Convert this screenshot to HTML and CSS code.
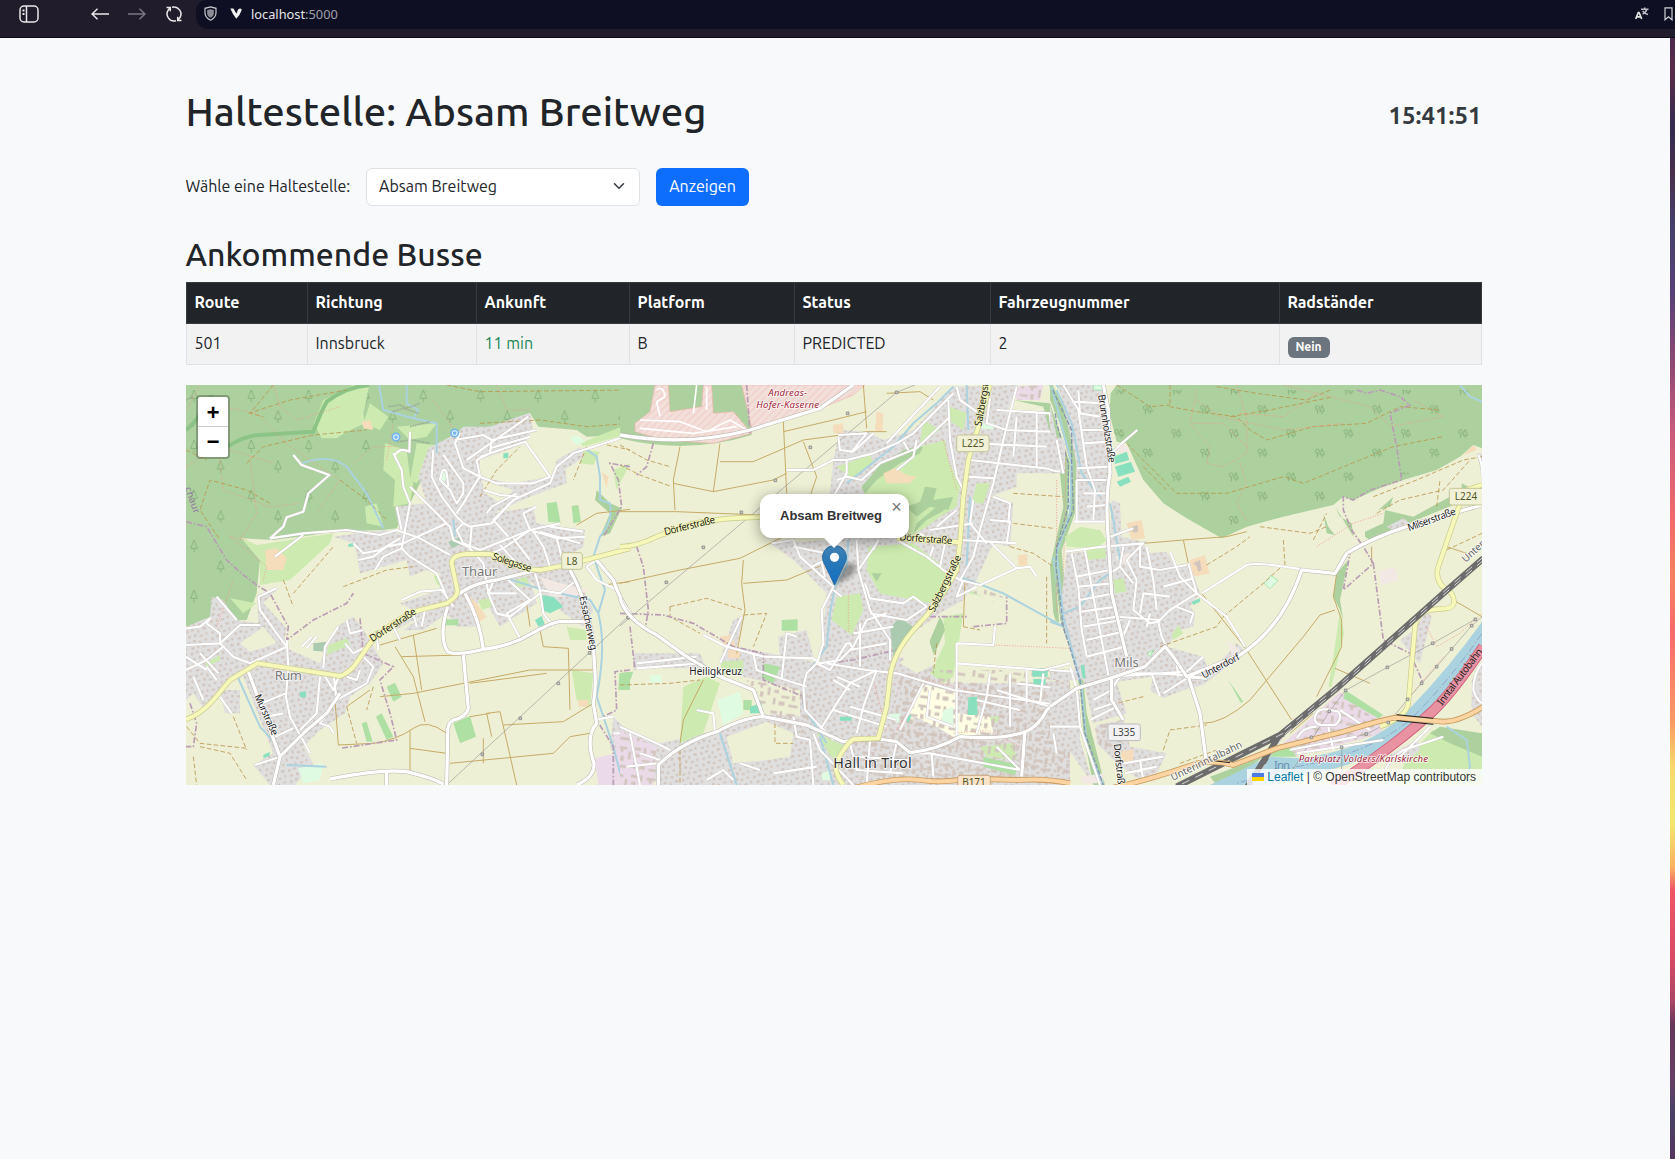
FILE: index.html
```html
<!DOCTYPE html>
<html lang="de">
<head>
<meta charset="utf-8">
<title>Haltestelle: Absam Breitweg</title>
<link rel="stylesheet" href="styles.css">
</head>
<body>
<header class="browser">
  <nav class="tools">
    <svg class="ico side" width="20" height="18" viewBox="0 0 20 18"><rect x="1" y="1" width="18" height="16" rx="4"/><path d="M7.500 1v16"/><path d="M3.500 5.500h2M3.500 9h2" stroke-width="2"/></svg>
    <svg class="ico back" width="18" height="12" viewBox="0 0 18 12"><path d="M18 6H1M6.500 .8L1 6l5.500 5.200"/></svg>
    <svg class="ico fwd" width="18" height="12" viewBox="0 0 18 12"><path d="M0 6h17M11.500 .8L17 6l-5.500 5.200"/></svg>
    <svg class="ico reload" width="18" height="18" viewBox="0 0 18 18"><path d="M7 2.300A7 7 0 0 1 14.800 12.800L13.300 14.700M11 15.700A7 7 0 0 1 3.200 5.200L4.700 3.300M1.500 2.500H5.300V6.300M16.500 15.500H12.700V11.700"/></svg>
  </nav>
  <div class="url">
    <svg width="13" height="15" viewBox="0 0 13 15"><path d="M6.500 .8L12 2.300v4.500c0 3.500-2.300 6-5.500 7.400C3.300 12.800 1 10.300 1 6.800V2.300z" fill="none" stroke="#c9c9ce" stroke-width="1.200"/><path d="M6.500 3.200l3.300.9v3.100c0 2-1.300 3.500-3.300 4.600-2-1.100-3.300-2.600-3.300-4.600V4.100z" fill="#8c8c95"/></svg>
    <svg class="vee" width="12" height="11" viewBox="0 0 12 11"><path d="M.3.500h3.200L6.300 5.500Q7.300 4.700 7.600 2.600 8 .6 9.800.4q2.300.1 1.700 2Q9.800 7.500 6.300 10.700 3 7 .3.500z" fill="#f1f1f1"/></svg>
    <span class="addr">localhost<i>:5000</i></span>
    <span class="grow"></span>
    <svg class="trans" width="14" height="13" viewBox="0 0 14 13"><path d="M.7 12L3.300 5.500h.8L6.700 12M1.800 9.800h3.800" fill="none" stroke="#e4e4e4" stroke-width="1.700"/><path d="M6 2.200h7.500M9.700.5v1.700M11.800 2.500Q11 5.500 7.500 7M7.700 3.800Q9.300 6.500 13 7.500" fill="none" stroke="#bcbcc4" stroke-width="1.500"/></svg>
    <svg width="9" height="14" viewBox="0 0 9 14"><path d="M1 .8h7v12L4.500 9.800 1 12.800z" fill="none" stroke="#d0d0d6" stroke-width="1.200"/></svg>
  </div>
</header>
<div class="view">
<main>
  <div class="head"><h1>Haltestelle: Absam Breitweg</h1><div class="clock">15:41:51</div></div>
  <form class="pick">
    <label>Wähle eine Haltestelle:</label>
    <div class="select"><span>Absam Breitweg</span><svg width="16" height="12" viewBox="0 0 16 16"><path d="M2 5l6 6 6-6" fill="none" stroke="#343a40" stroke-width="2" stroke-linecap="round" stroke-linejoin="round"/></svg></div>
    <button type="button">Anzeigen</button>
  </form>
  <h2>Ankommende Busse</h2>
  <table>
    <colgroup><col class="c1"><col class="c2"><col class="c3"><col class="c4"><col class="c5"><col class="c6"><col class="c7"></colgroup>
    <thead><tr><th>Route</th><th>Richtung</th><th>Ankunft</th><th>Platform</th><th>Status</th><th>Fahrzeugnummer</th><th>Radständer</th></tr></thead>
    <tbody><tr><td>501</td><td>Innsbruck</td><td class="soon">11 min</td><td>B</td><td>PREDICTED</td><td>2</td><td><span class="badge">Nein</span></td></tr></tbody>
  </table>
  <section class="map">
    <svg class="tiles" width="1296" height="400" viewBox="0 0 1296 400">
      <defs>
        <pattern id="houses" width="71" height="67" patternUnits="userSpaceOnUse" patternTransform="rotate(-12)"><rect width="71" height="67" fill="#e0dfdf"/><path class="house" d="M3 4h7v8H3zM18 2h9v6h-9zM36 7h6v9h-6zM53 3h10v7H53zM5 21h9v6H5zM24 18h7v9h-7zM40 24h10v6H40zM58 19h6v8h-6zM2 38h6v9H2zM17 35h9v7h-9zM34 40h7v7h-7zM52 37h8v6h-8zM8 55h9v7H8zM26 53h6v9h-6zM42 56h10v6H42zM60 52h6v8h-6z"/></pattern>
        <pattern id="blocks" width="97" height="83" patternUnits="userSpaceOnUse" patternTransform="rotate(8)"><path class="house" d="M4 5h19v9H4zM31 4h8v20h-8zM7 25h14v10H7zM52 8h26v8H68v9h-8v-9h-8zM84 20h8v24h-8zM30 40h24v7H30zM62 36h10v16H62zM6 50h8v20H6zM24 58h18v12H24zM54 64h28v8H54z"/></pattern>
        <pattern id="mil" width="16" height="16" patternUnits="userSpaceOnUse" patternTransform="rotate(45)"><rect width="16" height="16" fill="#f3dfd9"/><path d="M8 0v16" stroke="#eebfb9" stroke-width="2"/></pattern>
        <pattern id="pines" width="172" height="150" patternUnits="userSpaceOnUse"><path id="pine" d="M42 30l-10 25h20zM42 55v12" fill="none" stroke="#83b078" stroke-width="2.600"/><use href="#pine" x="80" y="62"/></pattern>
        <pattern id="mixed" width="172" height="130" patternUnits="userSpaceOnUse"><g id="mx" fill="none" stroke="#80ad76" stroke-width="2.600"><circle cx="28" cy="25" r="6"/><path d="M28 31v13M42 18l-7 18h14zM42 36v8"/></g><use href="#mx" x="86" y="58"/></pattern>

        <g id="a-major">
          <path d="M205 875L300 1130L280 1215M300 1130L370 1060L440 1000L480 940"/>
          <path d="M820 655Q870 610 950 600L1080 568"/>
          <path d="M855 640Q900 720 910 808M803 680Q775 770 803 815Q830 828 910 808Q990 800 1060 758Q1130 720 1150 725L1215 725"/>
          <path d="M850 825L865 985Q860 1010 820 1020Q800 1030 803 1070L800 1215"/>
          <path d="M1170 570Q1240 700 1243 850Q1250 920 1240 970L1250 1030Q1215 1070 1242 1150Q1245 1190 1190 1215"/>
          <path d="M1245 535L1300 600Q1320 660 1350 700"/>
          <path d="M450 1197Q640 1160 700 1180Q760 1195 790 1212M620 1175V1215"/>
        </g>
        <g id="a-minor">
          <path d="M270 475L310 440L320 412L370 395L385 340L448 285L365 255L340 225"/>
          <path d="M270 475L370 460L500 450L600 465L650 450L720 475L810 525M285 530L370 465"/>
          <path d="M645 225Q660 200 688 215L690 155M640 220L665 270L670 320L690 370L675 450L665 505L690 530L770 580L800 650"/>
          <path d="M760 210L755 290L785 350L830 410L850 430L870 440L935 430L1000 360L1110 310L1130 260L1180 220L1350 165"/>
          <path d="M690 320L770 400L810 440L820 480L865 500L910 550L925 640L950 700L990 710L1080 640"/>
          <path d="M790 225L850 310L850 340L830 370L810 330L780 300Q790 250 800 280L805 320M900 290L880 320L850 370L830 400M900 290L850 265L825 190L840 160M825 180L910 165L935 180L930 220L890 240L900 290L950 310L1060 310L1110 290L1035 185L900 230M935 180L1070 150M930 205L1050 170M860 240L1045 110"/>
          <path d="M520 490L550 520L600 510L660 475M535 540L580 530L620 500L670 490L800 430M585 570L610 530L665 505M650 380L665 450"/>
          <path d="M850 430L830 450L850 490L900 510L1050 450L1140 430M875 440L870 500M910 330L960 345L1015 350M920 400L935 380L1010 340M935 520L970 505L1050 450L1130 475L1215 470M1130 475L1150 550L1175 570M1060 455L1090 500L1110 560M1050 450L1030 400L1070 380M1000 360L940 420L985 470M1000 475L1050 540M960 495L1010 550M1080 455L1200 490M1110 440L1210 455"/>
          <path d="M1065 580L1080 630L1140 640L1190 600M1080 630L1090 700L1120 740M985 600L1050 660L980 700L1020 775M940 605L925 640L1010 640M665 660L720 635L785 630L820 680M640 740L660 780M700 700L710 740M735 690L725 740M590 770L595 810"/>
          <path d="M18 795L120 790L160 830L210 850L320 800L290 760L240 690L235 650L290 625M18 745L60 740L90 715L80 730L120 760L120 790L180 735L240 735M110 650L170 720M18 870L80 840L130 800M40 890L70 960M80 860L110 900M60 820L115 880M18 830L80 870"/>
          <path d="M320 780L325 860L318 950L330 1010L390 1120M430 865L435 800L475 740M365 800L395 770M380 805L410 770M500 720L510 760L550 750M495 790L520 820L560 800M460 880L470 960L420 1030L450 1040L460 1060M470 960L560 910L580 860L550 830M420 890L410 1000L360 1050M430 880L460 930L480 880M245 970L318 940M260 1010L310 1000M285 1070L340 1045M225 1155L300 1130M540 870L530 900L500 890"/>
          <path d="M120 950L155 1000M1250 540L1220 560L1250 600L1310 630M1250 1018L1300 1010M1300 1060L1350 1060"/>
        </g>
        <g id="a-yellow"><path d="M18 1018Q60 1005 100 960L150 900L232 850L330 865L480 888Q505 880 525 855L570 790Q640 715 720 690L800 670Q835 650 832 630L815 550Q815 525 860 522L930 522L1000 550Q1040 570 1080 570L1160 555L1350 505"/></g>

        <g id="b-major">
          <path d="M0 165Q200 200 390 150L600 85L700 15"/>
          <path d="M0 655Q20 720 110 765L200 830L300 890L400 930L430 1010M115 1215V1155Q180 1090 290 1055Q380 1010 430 1010L560 1035L670 1085Q760 1070 830 1085L870 1118Q950 1110 1020 1070Q1130 1080 1200 1060Q1250 1050 1280 990L1350 935M1215 1050L1205 1190"/>
        </g>
        <g id="b-minor">
          <path d="M500 270H580L640 240L680 240L760 220L830 190L880 160L1000 40M655 165L740 160L690 220M655 170L660 210L700 215L760 160M680 240V280L640 350M650 300L680 290L725 300L780 250L890 205L990 110M830 270L880 230L890 180M850 185L865 210M800 190L960 20"/>
          <path d="M455 490L520 480L540 530L640 620L605 690L610 790L590 850L560 880L550 920L555 990L640 1080M520 500L620 520L640 480M575 560L605 545L615 590M650 490L640 570M710 480L715 570L750 690L810 780L810 840M715 570L770 490M735 610L750 655L850 670L880 650L920 680L860 720L750 700M775 480L760 510M640 630L665 650"/>
          <path d="M830 480L920 530L970 570L1020 600L1080 615L1190 565L1230 560L1250 590M1190 565L1110 485L1190 490M1110 420L1170 425L1160 490M1070 620L1010 650L1030 600M975 490L960 560M1020 480L1110 485M930 530L940 500"/>
          <path d="M985 60L990 180L1010 290L1030 330M1010 20L1020 60L1070 95M1190 20L1150 180L1120 310L1080 450L1060 530L1020 600M1050 240L1320 270M1070 190L1280 200M1130 90L1290 100L1300 220L1330 280M1190 110L1180 230M1250 95V260M1160 150L1290 155M1110 55L1100 130L1160 150M1040 290L1125 295M1120 350L1170 370L1165 430M1060 360L1050 430L1100 490M950 440L1010 390M930 450L1060 430M900 460L940 490"/>
          <path d="M430 830L580 835L600 850L660 840L700 800L740 720L800 700M485 895L500 760L530 770M400 820L410 870L480 895L560 920M590 850L630 870L680 790L690 790L700 810M620 850L740 870L830 880L1000 930L1350 980M770 870L690 910L650 970L600 1050M770 870L730 980L710 1060M690 980L830 1020M640 990L800 1040M650 890L720 920M640 900L690 930M700 760L820 740M690 810L800 790M720 730V860"/>
          <path d="M50 850L230 830M50 865L240 850M250 765L320 800L430 830M365 710L300 850M230 990L280 1000L285 1060M840 1050L910 910M1010 790L1010 1070M1010 790L1120 795L1125 740M1010 850L1270 870L1350 850M1110 880L1100 950L1070 1060M1170 880V1040M1130 930L1350 1000M1070 960L1200 990M1190 910L1350 930M1220 870V970M1270 880L1260 970M930 930L920 1010L1000 1040"/>
          <path d="M0 1040L110 1090L150 1110M30 1060L60 1215M60 1120L120 1140M20 1160L110 1150M520 1010L530 1070L570 1080L580 1215M580 1060L600 1110L700 1215M690 1090L710 1170L850 1180M750 1080L740 1215M700 1130L870 1140M830 1085L810 1180M870 1120L930 1120L1200 1170M1130 1100L1200 1170M260 1200L310 1170L340 1200M460 1180L590 1160M360 1150L420 1170M935 1120L940 1190"/>
        </g>
        <g id="b-yellow"><path d="M0 500Q50 500 110 470L220 430Q330 410 430 412L500 412M830 475L1020 487"/><path d="M1110 15L1072 150L1045 240L1030 350L1020 487L1010 570Q960 670 880 750Q820 820 810 890L800 980L775 1075L700 1078Q680 1090 650 1145Q640 1175 670 1215"/></g>

        <g id="c-major">
          <path d="M160 15L175 90L180 280Q165 350 175 480L185 640L230 830M0 980L80 925L180 895L285 860L345 800L370 830L410 890L470 895M185 895L185 960L220 1020M415 890L450 1000L468 1140M410 890L570 825Q700 740 755 570L855 580L890 520Q970 470 1100 430L1296 375"/>
        </g>
        <g id="c-minor">
          <path d="M585 800L530 710L440 640L415 550M455 640L590 555Q620 545 755 568"/>
          <path d="M40 15L85 90L110 260L135 330L130 420M85 30L90 100L150 110M65 65L170 70M95 150H170M100 190L180 185M80 265L180 260M80 300H175M100 340H170M110 380L170 375M70 425H170M80 300V430M20 180L40 280M0 270L30 275"/>
          <path d="M185 220L215 190L262 150M180 470L250 445M45 515L160 500L280 490L230 540L260 600L250 690L300 730L325 725L335 770L350 800M65 520L85 620L95 750L110 830M105 510L130 650L175 885M210 560L250 610M180 580L210 560L220 500M80 590L180 570M85 620L185 610M90 660L190 640M95 695L200 680M100 740L215 720M110 780L220 755M110 830L225 800M140 720L200 710L330 720M240 720L215 780"/>
          <path d="M360 515L390 590L440 640L360 690L325 725M330 570L410 555M340 620L430 595M290 500L310 600L320 690M270 500V560L330 570M380 680L430 700L420 730M360 650L280 640L270 700M300 700L290 740"/>
          <path d="M185 890L410 875L460 830M210 880L320 880L400 885M340 940L410 895M305 880L330 950M190 920L210 890M380 850L385 890M60 860L80 925L90 1040L150 1215M0 1040H90M10 1060L20 1120M0 870L70 875M120 1020L200 980M130 990L190 970M130 960L185 930M220 1150L340 1130M225 1180L320 1160M270 1140L280 1200"/>
          <path d="M795 1010Q800 985 830 988L865 995Q880 1015 855 1035L810 1035Q790 1025 795 1010M740 1075Q760 1040 800 1040M835 1040L850 1110M720 1110L920 1070M740 1120L1000 1080M870 990L960 1050M1000 1190Q1010 1140 1060 1110L1180 1070M1050 1130L1140 1040M1296 850Q1270 880 1270 930Q1280 960 1296 970M1285 225Q1300 260 1296 290"/>
        </g>
        <g id="c-yellow"><path d="M1296 315L1250 330L1225 385L1165 560Q1150 610 1205 640Q1225 680 1190 685L1140 690Q1100 700 1095 740L1075 970Q1070 1010 990 1040"/></g>
      </defs>

      <g transform="translate(-6 -5) scale(.33333)">
        <path class="forest" d="M18 15H1350V165L1220 170L1190 150L1075 140L1050 100L930 140L850 150L830 200L800 235L750 250L720 310L690 370L650 445L610 450L450 455L400 465L280 480L185 475L240 540L230 640L200 720L170 720L110 650L95 700L105 740L18 740ZM1250 330L1290 370L1325 385L1290 460L1260 470L1290 400L1245 360Z"/>
        <path class="pines" d="M18 15H1350V130H1075L1050 100L930 140L800 150L640 200L600 440L450 455L280 480L185 475L230 540L200 640L80 640L18 720Z"/>
        <path class="grass" d="M430 60L520 15H568L550 100L555 130L500 155L470 175H425L402 130ZM570 70L625 110L600 150L550 130ZM615 190L680 210L690 290L700 310L690 370L640 380L645 300L610 270ZM710 190L765 195L750 250L710 310L690 300ZM650 140L770 130L740 170L690 180ZM185 475L230 495L460 460L450 490L330 600L240 615L240 540ZM555 380L590 370L610 440L560 430ZM150 655L230 670L190 700ZM830 370L890 355L905 370L840 395ZM1210 210L1260 215L1240 255L1200 250ZM1300 270L1350 250L1310 330ZM1175 870L1240 880L1230 980L1190 960ZM1160 740L1220 750V780H1170ZM1200 190L1350 130V160L1210 200Z"/>
        <path class="orchard" d="M1100 370L1130 365L1142 430L1105 425ZM1175 378L1195 375L1203 425L1180 430ZM620 920L645 908L665 950L640 965ZM545 1030L560 1025L578 1085L560 1085ZM588 1010L605 1000L640 1070L620 1080ZM820 1030L870 1008L888 1070L840 1090ZM1318 880L1350 875V930H1315Z"/>
        <path class="town" d="M715 290L745 205L830 160L850 140L930 140L1050 98L1058 140L1035 190L900 240L895 290L1000 310L1110 290L1155 250L1160 310L1050 350L940 400L1060 380L1070 430L1215 450L1210 500L1160 530L1240 690L1210 740L1110 670L1050 600L1070 670L960 740L920 670L860 670L900 740L830 740L800 700L730 750L640 750L700 690L660 670L780 630L780 580L740 570L690 590L680 540L540 580L525 490L460 470L610 450L660 460L645 380L740 370ZM18 740L90 710L95 650L130 660L165 720L235 730L232 650L295 625L250 670L320 745L310 800L420 850L470 740L520 710L550 750L610 850L570 910L510 950L495 1000L420 1050L370 1100L400 1150L345 1215H270L220 1155L280 1120L190 890L140 910L70 985L40 940L18 960ZM1130 240L1200 200L1215 230L1120 290ZM1300 1010L1350 1060V1215L1290 1100ZM120 930H180V1000H135Z"/>
        <path class="orchard" d="M795 718H835V736H795Z"/><path class="grass" d="M445 795L500 775L510 795L440 825ZM75 850L120 825V840L80 862ZM760 585L775 590L785 625L770 610ZM1005 600L1040 590L1048 618L1010 620ZM895 660L930 655L935 680L905 690Z"/>
        <path class="farm" d="M600 775L740 700L600 800ZM905 300L1000 330L960 370L915 340ZM180 790L250 740L290 790L210 815ZM690 590L740 570L750 600L700 620Z"/>
        <path class="industry" d="M1245 1135L1310 1120L1300 1060L1350 1080V1215H1255Z"/><path class="pale" d="M1080 590L1140 610L1230 630L1180 650L1110 650Z"/>
        <path class="sport" d="M1080 645L1120 650L1150 680L1110 700L1085 690ZM1065 720L1085 708L1095 735L1075 740ZM360 935H378V952H360ZM970 220L985 218V235H970ZM505 493L520 488V500H505ZM250 1125L270 1115L268 1128L250 1135Z"/>
        <path class="mint" d="M355 1165L430 1150L420 1200L370 1210ZM785 270L800 285L790 315L780 300ZM1170 175Q1190 155 1215 185L1190 195Z"/>
        <path class="farmyard" d="M255 510L290 505L320 535L310 570L260 570ZM545 125L570 120L580 150L550 145ZM870 650L890 670L920 710L900 725L880 690ZM1265 275L1285 290L1280 325ZM1195 960H1225V980H1195Z"/>
        <path class="church" d="M805 485L840 470L848 490L815 505ZM400 790L440 785L435 815L400 812Z"/>
        <path class="water" d="M597 15L610 90L700 115L770 130L770 220M680 15V70L715 90L700 115M365 250Q450 220 500 260L560 340L610 445M1215 205L1250 230L1260 290V360L1290 370Q1300 420 1260 470L1240 530L1275 630L1255 700Q1280 800 1250 950L1300 1100L1330 1215M980 595L1090 630L1230 660L1255 700M175 895L240 1040L285 1090M320 1155L440 1160M820 420L825 470"/>
        <path class="ridge" d="M18 150Q60 120 75 60L100 50M145 198Q200 165 240 165L400 155Q425 90 440 65Q500 20 568 15"/>
        <path class="track" d="M18 210L80 240M205 100L330 60L500 30M280 15L210 100L250 110M200 250L250 200L400 165L560 150M270 370L200 330L90 300L60 390L120 480M480 300L560 360L620 420M900 130L1080 120L1220 140L1350 130M800 15L900 35L1350 30M900 350L950 270L1020 200M1220 200L1180 300M490 620L620 570L700 560M340 640L460 500M310 600L340 680M60 1100L150 1120L200 1200M40 1130L50 1215M20 1040L60 1090L200 1105M160 1010L200 1110M500 980L530 1090M580 920L560 990M1260 190L1350 210"/>
        <path class="path" d="M60 15L20 90M280 15L300 80L350 120L480 80M130 80L230 100L330 200L480 300L410 400M18 260L120 200L280 250M110 170L130 330L270 380L360 370M200 480L150 470L260 560L250 600M110 740L160 600M620 240L640 130M650 200L580 200L520 250M760 60L830 160M950 15L980 90L1050 90M210 230L230 400L180 480"/>
        <path class="field" d="M600 795L770 745M645 800L700 890L735 1025M700 765L725 930M665 830L850 825M600 950L700 940L1050 870L1240 870M870 910L1100 880M920 1000L960 995L1010 1215M970 1035L1150 1025L1240 970M690 1105L800 1120M690 1050V1175M810 1150L1120 1120L1170 1070L1230 1060M910 1075V1150M465 960L475 1095L580 1090Q650 1080 700 1045Q740 1015 800 1060M500 980L570 930M1080 750L1090 800L1165 805L1170 990M1040 670L1050 740M920 1000L935 1070M870 1010L930 1000M1190 435L1250 400L1350 388M1270 615L1350 605"/>
        <path class="border" d="M18 425L80 440L140 540L190 585L230 615L270 640L325 740L320 780L400 720L500 670L520 640M540 715L550 820L640 860L600 900L630 1000L650 1080L480 1105M30 970L50 1030L40 1100L18 1100M1350 260L1290 250L1315 300L1325 380L1270 470M1350 870L1305 875L1310 990L1250 1020L1300 1100V1215"/>
        <path class="power" d="M800 1215L1350 705"/>
        <path class="knots" d="M1131 906h8v8h-8zM1017 1011h8v8h-8zM903 1119h8v8h-8zM1225 815h8v8h-8zM1341 708h8v8h-8z"/>
        <path class="rocks" d="M625 80L660 75L680 85L720 70M640 95L670 85L715 100M690 140L750 125M650 185L700 180L750 190M18 60L40 50"/>
        <g class="minor-case"><use href="#a-minor"/></g><g class="minor"><use href="#a-minor"/></g>
        <g class="major-case"><use href="#a-major"/></g><g class="major"><use href="#a-major"/></g>
        <g class="yellow-case"><use href="#a-yellow"/></g><g class="yellow"><use href="#a-yellow"/></g>
        <g class="spring"><circle cx="648" cy="171" r="11"/><circle cx="824" cy="159" r="11"/><circle cx="648" cy="171" r="3"/><circle cx="824" cy="159" r="3"/></g>
      </g>

      <g transform="translate(434 -5) scale(.33333)">
        <path class="forest" d="M0 15H392L395 165Q200 225 0 175ZM960 710L975 740L940 830L920 850L950 760Z"/>
        <path class="military" d="M45 130L90 95L105 15H145L150 95L245 80L250 15H275L280 100L340 95L395 160L280 190L130 180L45 155ZM365 15H735L700 45L590 90L395 145Z"/>
        <path class="town" d="M640 240L660 150L740 155L790 180L880 150L1000 20L1190 15L1160 100L1290 90L1330 280H1190L1190 320L1110 350L1180 370L1170 500L1120 490L1060 620L1030 660L960 700L880 760L830 830L960 850L970 910H1190L1350 900V1215H120L20 1140L0 1215V1040L120 1090L300 1050L430 1000L540 1010L540 930L370 890L300 840L340 720L370 705L350 800L600 850L620 640L520 540L450 490L640 480L630 340ZM40 820L240 820L260 865H40ZM475 770L560 750L580 830H480Z"/>
        <path class="grass" d="M725 320L800 240L880 205L975 180L985 240L1020 320L1010 380L960 410L920 440L870 470L850 400L740 360ZM745 500L880 490L970 560L985 610L930 670L780 640L740 570ZM650 650L720 640L730 690L695 765L635 720ZM970 710L1030 700L1000 890L970 910L930 880L975 790ZM650 260L750 225L760 245L700 300ZM990 80L1040 100L1030 150L985 120ZM910 120L960 150L900 190ZM190 920L260 890L300 910L250 1060L180 1090ZM1070 310H1110L1090 370H1055ZM590 1060L680 1100L640 1140ZM300 845L370 840V880L310 885ZM1050 630L1090 650L1130 660V680L1040 675ZM1080 1100L1180 1090L1190 1140L1100 1130ZM1090 1010H1140L1130 1030Z"/>
        <path class="forest" d="M725 320L780 255L860 205L910 200L900 220L840 250L770 300L735 340ZM860 380L900 365L915 320L950 325L940 360L1000 350L985 390L930 380L890 410ZM890 430L950 380L975 390L920 420L880 460ZM755 580L785 580L770 605ZM960 710L975 750L940 830L920 850L930 780ZM1180 60L1290 70L1350 250L1340 470L1305 560L1320 760L1350 820V860L1300 700L1290 560L1330 380L1320 280L1270 80Z"/>
        <path class="farm" d="M440 940L520 960V1000L440 1005ZM320 1070L440 1025L520 1060L510 1130L440 1140L340 1150ZM840 850L920 760L950 850L890 880ZM1040 640L1150 660L1350 740V850L1130 840L1040 800ZM860 1010L880 990V1030Z"/>
        <path class="blocks" d="M830 870H1350V1200H680L700 1080H800L830 960ZM0 1080L120 1150V1215H0ZM380 900L560 930L600 1060L520 1060L430 1000ZM1070 620L1150 650L1130 670L1060 640Z"/>
        <path class="school" d="M920 915L1010 940V1000L1110 1010L1120 1060L1000 1070L950 1040L860 1000L900 930Z"/>
        <path class="blocks" d="M860 920H1120V1070H860Z"/>
        <path class="industry" d="M0 1050L110 1100L100 1215H0ZM1185 20L1270 15L1260 60H1190Z"/><path class="blocks" d="M0 1050L110 1100L100 1215H0ZM1185 20L1270 15L1260 60H1190Z"/>
        <path class="orchard" d="M0 880L40 875L20 930H0ZM430 850L480 860L460 910L425 895ZM485 720L533 718V752H485ZM1090 1130L1195 1155L1185 1185L1090 1160ZM370 960H395V990H370Z"/>
        <path class="church" d="M810 740L840 715L880 740L820 830Z"/>
        <path class="sport" d="M1237 865H1283V890H1237ZM1240 897H1277V914H1240ZM1045 952L1072 950V1005H1043ZM855 1010L875 1005L865 1030ZM660 1010H695V1022H660ZM390 980L425 970V1000H390Z"/>
        <path class="mint" d="M292 960L360 935L370 1000L310 1035ZM970 990L1000 980V1040L965 1030ZM605 1180L630 1170V1200H605ZM1085 130H1120V148H1085ZM800 1005L840 1000L835 1030ZM90 885H125V908H90Z"/>
        <path class="farmyard" d="M640 135L670 130V160H640ZM770 95L790 100L788 155L765 150ZM790 280L825 265L860 285L890 290L870 310H800ZM1195 525L1222 523V557H1195ZM300 770L335 765L350 810L310 800ZM325 810H360V835H325Z"/>
        <path class="water" d="M1000 20L950 70L880 130L820 200L680 310M1040 15L1045 150M685 480L680 560L645 620L630 700L620 800L555 890L550 980L620 1090M1290 15L1350 230M1050 350L1040 560M1020 590L1150 640L1330 740L1350 745M300 1060L350 1215M1300 530L1330 740M1310 15L1350 60M600 1070L640 1215"/>
        <path class="canal" d="M1295 20L1310 130L1345 250V380L1310 500L1312 620L1325 730L1350 800"/>
        <path class="track" d="M0 195L80 240L150 260M0 255L60 285L155 320M150 680L260 655L370 690M150 680V710L240 760M370 705L440 700L400 800M0 915L150 910L240 900M180 1110V1215M1180 340L1330 350M1180 430L1300 445M1170 500L1240 520L1300 560M1280 590V790M1030 740L1080 750M950 790L940 880M465 1030V1090H520"/>
        <path class="path" d="M685 640V760M1120 795L1350 805M1310 300V700M830 1050L920 900L1090 940M1000 1060L1100 1050L1200 1100M760 900L800 1050M970 180L1010 330M1300 30L1340 150L1330 600"/>
        <path class="field" d="M180 200L160 300L165 390M300 190L280 335L160 310M280 335L460 300L500 280M490 125L500 340M490 155L640 120L740 95M300 245L400 245L550 180L740 155H800M550 185L590 290L570 350M0 395H170L420 405M370 540L365 610L375 690L350 820M0 610L180 570L360 535L490 470M370 610L500 600L620 550M730 15L740 145M800 40L900 35L940 60M1035 600L1030 740M250 900L190 1020L180 1090"/>
        <path class="border" d="M100 190L80 260L50 285M50 500L70 560L85 690L75 750M0 700L130 705L220 730L340 800L430 820V900L550 950M380 15L390 160M620 850L700 840L830 810M930 710H1040M1060 740L1160 730V650M550 970V900M30 740L45 870"/>
        <path class="power" d="M0 738L830 37L885 15"/>
        <path class="knots" d="M21 709h8v8h-8zM135 603h8v8h-8zM246 498h8v8h-8zM360 393h8v8h-8zM462 297h8v8h-8zM567 198h8v8h-8zM679 96h8v8h-8zM826 33h8v8h-8z"/>
        <path class="milroad" d="M60 120L180 125L260 155L330 120L380 150M60 145L220 160L350 140M110 30Q130 15 135 50L110 65L120 110M220 100L230 15M260 90V20"/>
        <g class="minor-case"><use href="#b-minor"/></g><g class="minor"><use href="#b-minor"/></g>
        <g class="major-case"><use href="#b-major"/></g><g class="major"><use href="#b-major"/></g>
        <path class="orange-case" d="M700 1225Q820 1190 900 1200Q960 1210 1040 1196L1200 1200Q1280 1195 1350 1210"/><path class="orange" d="M700 1225Q820 1190 900 1200Q960 1210 1040 1196L1200 1200Q1280 1195 1350 1210"/>
        <g class="yellow-case"><use href="#b-yellow"/></g><g class="yellow"><use href="#b-yellow"/></g>
      </g>

      <g transform="translate(864 -5) scale(.33333)">
        <path class="forest" d="M200 15H1296V205L1270 195L1230 230L1160 270L1060 300L1000 320L910 360L880 350L850 375L700 410L590 440L515 475L410 415L340 370L280 300L230 190L200 185L178 100L182 40ZM8 15L60 120L80 260L75 400L35 510L50 700L75 790L100 900L110 1000L165 1215H130L100 1060L90 930L60 800L30 710L15 560L25 480L60 390L62 250L30 130L0 60V15ZM820 400L835 440L855 465L830 460ZM855 380L870 410L905 430L910 470L880 420ZM945 470V455L1000 430L1005 390L1090 410L1200 350L1210 375L1050 440L960 480ZM1235 310L1255 320L1235 330ZM985 390L1030 350L1020 380ZM860 580L895 540L870 660L880 720L870 690L850 650ZM480 1190L640 1130L560 1190L500 1215Z"/>
        <path class="mixed" d="M200 30H1280V180L1230 220L1050 290L850 360L590 420L515 450L410 400L340 350L240 190L190 160Z"/>
        <path class="grass" d="M45 470L90 440L150 450L170 480L140 505L50 500ZM108 510L165 505L168 535L110 540ZM870 690L882 760L845 920H835L850 830ZM1070 1130L1150 1050L1296 1060V1215H1040Z"/>
        <path class="forest" d="M1140 1060L1170 1040L1296 1060V1130L1200 1090Z"/>
        <path class="town" d="M25 15H165L180 290L170 430H75L80 250ZM0 70L20 170L45 180V280H0ZM185 360L210 370L215 470L280 485L290 520L350 515L380 570L420 550L450 640L420 680L435 700L430 740L390 750L350 800L460 830L480 880L560 790L590 815L460 915L400 930L340 955L300 930L310 890L200 905L230 1000L130 1030L100 900L0 900V870H75L30 690L50 520L160 510L180 480ZM125 840L180 830L220 830L180 890L115 910ZM0 900L90 940V1080L130 1215L50 1100L0 1080ZM140 1035L220 1020L240 1100L350 1120L320 1180L270 1200L200 1150L140 1090ZM1130 690L1145 710L1110 850L1090 830L1050 780L1095 750ZM1010 440L1060 415L1080 430L1030 450ZM1280 220H1296V290ZM1296 850L1265 900V1000L1296 1040ZM1010 1130L1100 1080L1110 1110L1060 1150Z"/>
        <path class="grass" d="M190 600L220 595L230 635L195 640ZM365 765L385 735L400 760L370 780ZM108 510L165 505L168 535L110 540Z"/>
        <path class="industry" d="M700 1090L870 935L980 1010L1000 1060L730 1130Z"/><path class="blocks" d="M720 1080L870 940L980 1020L960 1070L730 1120ZM130 1030L220 1020V1100H150Z"/>
        <path class="pale" d="M985 575L1035 560L1045 600L995 615ZM190 530L240 520V560L210 545ZM90 1190L160 1180V1210H100ZM530 780L570 810L550 840ZM190 220L220 190L240 215Z"/>
        <path class="farmyard" d="M230 430L275 420L285 475L245 480ZM420 540L465 525L478 580L430 590ZM210 1115L250 1108V1145H210ZM1270 195L1280 210L1240 225Z"/>
        <path class="house" d="M430 550L450 540L455 570L445 575L440 558ZM245 440L262 435L265 455L250 458Z"/>
        <path class="sport" d="M190 230L230 215L238 240L195 252ZM195 260L243 245L255 275L205 290ZM200 305L235 290L243 305L210 320ZM425 665L450 655V665L430 675ZM92 855H103L107 895H97Z"/>
        <path class="mint edge" d="M643 610L662 586L684 602L660 626ZM292 820L310 810L300 830ZM130 15H165V30H130Z"/>
        <path class="orchard" d="M885 930L1000 1005L985 1015L880 955ZM535 900L580 965L572 968ZM640 1110L720 1100L740 1130H640Z"/>
        <path class="river" d="M1296 725Q1200 860 1075 990Q960 1110 750 1135L650 1130Q590 1165 480 1215H660L700 1190Q850 1180 950 1130Q1080 1070 1180 960L1296 800Z"/>
        <path class="river-line" d="M1296 760Q1200 900 1080 1020Q960 1120 740 1160L560 1210"/>
        <path class="water" d="M20 30L65 130L95 280L150 350M180 370L190 420L210 540M180 580L150 600L90 680L40 700M5 20L65 250L60 400L20 520L40 710L95 920L110 1100L160 1215M1230 15L1260 50L1296 65M1190 1040L1250 1080L1260 1160L1240 1215M0 725L40 740"/>
        <path class="canal" d="M8 30L65 150V250L70 390L20 500L18 560L40 740L90 900L105 1060L160 1215"/>
        <path class="track" d="M200 15L300 80L360 75M360 15V80L440 95L560 110L600 150L650 180L790 140L950 130L1050 80L1170 90M500 20L620 40L770 60L840 30M540 110L660 90L850 50M230 190L280 240L380 340L530 340L700 290L760 310L930 240L1030 200L1180 170M280 260L350 330M630 440L780 460L830 440M470 555L560 500L600 470M700 480L705 555M520 710L640 610L700 555M330 800L500 740L520 710M970 350L1100 300L1240 240L1296 230M980 400L1050 360L1180 330L1260 240M1190 510L1296 460M1160 380L1170 300M340 1110L360 1050L470 1035M280 950L200 970M790 480L830 400M390 1150L500 1110"/>
        <path class="path" d="M440 30L420 130L480 200L470 250L520 260L590 220L590 110L560 15M570 100L700 110L800 40M430 130L520 130L590 200M440 60L510 110L700 150L880 130M570 250L590 310L560 370L590 420M700 15L960 80L1020 140L1180 110L1090 60M800 500L910 430L1000 400M1130 740L1160 800L1230 760L1296 700M1070 960L1180 830"/>
        <path class="field" d="M280 490L400 480L530 470L590 455M400 480L415 550M455 640L590 810L725 1020M460 1030Q520 1030 600 960L760 770L810 705L855 690M965 500V550M855 865L960 910M1210 660L1296 710M860 580L850 650L875 720V800L800 950M790 1000L720 1060M1190 500L1250 520"/>
        <path class="border" d="M920 30L950 40L990 30L1050 50L1080 75L1020 100L1040 200L1055 300L960 330L910 360L880 350V390L905 450L940 500L970 550L880 630L900 520M970 550L1000 780L1080 820L1120 910"/>
        <path class="power" d="M835 1090L950 1062L1015 1028L1073 958L1115 910L1160 860L1205 807L1265 737L1296 710M887 931L1012 862L1148 790L1276 718M700 1215L838 994L887 931M875 1102V1215"/>
        <g class="minor-case"><use href="#c-minor"/></g><g class="minor"><use href="#c-minor"/></g>
        <g class="major-case"><use href="#c-major"/></g><g class="major"><use href="#c-major"/></g>
        <g class="yellow-case"><use href="#c-yellow"/></g><g class="yellow"><use href="#c-yellow"/></g>
        <path class="rail" d="M1300 535L1180 640L860 925L690 1065L590 1225M700 1060L560 1130L380 1220"/><path class="rail-dash" d="M1300 531L1180 636L860 921L690 1061M1300 541L1180 645L860 930L700 1066L600 1225M700 1060L560 1130L380 1220"/>
        <path class="motor-case" d="M1300 800Q1200 950 1130 1010Q1030 1100 850 1220"/><path class="motor" d="M1300 800Q1200 950 1130 1010Q1030 1100 850 1220"/>
        <path class="orange-case" d="M180 1225Q300 1200 440 1150Q500 1140 550 1155L680 1105L880 1055Q1010 1015 1040 1013L1180 1025Q1230 1025 1300 980"/><path class="orange" d="M180 1225Q300 1200 440 1150Q500 1140 550 1155L680 1105L880 1055Q1010 1015 1040 1013L1180 1025Q1230 1025 1300 980"/>
        <path class="bridge" d="M1040 1004L1150 1015M1040 1022L1150 1033M490 1142L540 1148"/>
        <path class="knots" d="M883 927h8v8h-8zM1008 858h8v8h-8zM1144 786h8v8h-8zM1272 714h8v8h-8zM834 990h8v8h-8zM871 1098h8v8h-8zM945 1058h8v8h-8zM1011 1024h8v8h-8zM1069 954h8v8h-8zM1111 906h8v8h-8zM1156 856h8v8h-8zM1201 803h8v8h-8zM1261 733h8v8h-8zM780 1068h8v8h-8z"/>
      </g>

      <g transform="translate(-6 -5) scale(.33333)">
        <text class="place" x="846" y="588" textLength="106">Thaur</text><text class="place" x="284" y="900" textLength="82">Rum</text>
        <text class="road" transform="translate(935 538) rotate(18)" textLength="122">Solegasse</text>
        <text class="road" transform="translate(577 787) rotate(-33)" textLength="160">Dörferstraße</text>
        <text class="street" transform="translate(223 948) rotate(66)" textLength="132">Murstraße</text>
        <text class="street" transform="translate(1198 650) rotate(78)" textLength="166">Essacherweg</text>
        <text class="admin" transform="translate(14 325) rotate(70)" textLength="82">chaur</text>
        <g class="shield"><rect x="1145" y="518" width="62" height="50" rx="7"/><text x="1176" y="555">L8</text></g>
      </g>
      <g transform="translate(434 -5) scale(.33333)">
        <text class="camp" x="445" y="48" textLength="116">Andreas-</text><text class="camp" x="409" y="83" textLength="188">Hofer-Kaserne</text>
        <text class="road" transform="translate(135 466) rotate(-14)" textLength="157">Dörferstraße</text>
        <text class="road" transform="translate(838 481) rotate(4)" textLength="159">Dörferstraße</text>
        <text class="road" transform="translate(943 698) rotate(-64)" textLength="185">Salzbergstraße</text>
        <text class="road" transform="translate(1084 140) rotate(-80)" textLength="132">Salzbergst</text>
        <text class="street" x="208" y="885" textLength="158">Heiligkreuz</text>
        <text class="city" x="640" y="1164" textLength="235">Hall in Tirol</text>
        <g class="shield"><rect x="1010" y="165" width="97" height="50" rx="7"/><text x="1059" y="202">L225</text></g>
        <g class="shield b"><rect x="1013" y="1186" width="98" height="50" rx="7"/><text x="1062" y="1218">B171</text></g>
      </g>
      <g transform="translate(864 -5) scale(.33333)">
        <text class="street" transform="translate(144 45) rotate(81)" textLength="207">Brunnholzstraße</text>
        <text class="street" transform="translate(1077 454) rotate(-20)" textLength="152">Milserstraße</text>
        <text class="place" x="193" y="860" textLength="73">Mils</text>
        <text class="street" transform="translate(461 896) rotate(-28)" textLength="125">Unterdorf</text>
        <text class="street" transform="translate(191 1092) rotate(84)" textLength="122">Dorfstraß</text>
        <text class="railname" transform="translate(368 1203) rotate(-26)" textLength="234">Unterinntalbahn</text>
        <text class="railname" transform="translate(1247 549) rotate(-43)" textLength="80">Unter</text>
        <text class="auto" transform="translate(1176 978) rotate(-53)" textLength="204">Inntal Autobahn</text>
        <text class="river-name" x="672" y="1168" textLength="48">Inn</text>
        <text class="camp" x="746" y="1146" textLength="388">Parkplatz Volders/Karlskirche</text>
        <g class="shield"><rect x="1198" y="325" width="110" height="50" rx="7"/><text x="1248" y="361">L224</text></g>
        <g class="shield w"><rect x="174" y="1032" width="97" height="50" rx="7"/><text x="222" y="1068">L335</text></g>
      </g>
    </svg>
    <div class="zoomctl"><span>+</span><span>−</span></div>
    <svg class="shadow" width="41" height="41" viewBox="0 0 41 41"><path d="M1 40L8 22Q14 14 21 18Q24 24 17 30Z"/></svg>
    <svg class="pin" width="25" height="41" viewBox="0 0 25 41"><defs><linearGradient id="pg" x2="0" y2="1"><stop stop-color="#4689bd"/><stop offset=".3" stop-color="#2e7ab5"/><stop offset="1" stop-color="#126fc6"/></linearGradient></defs><path class="drop" d="M12.500.6C5.700.6.600 5.900.600 12.400c0 2.600.9 4.800 2.200 7.300L12.500 40l9.700-20.300c1.300-2.500 2.200-4.700 2.200-7.300C24.400 5.900 19.300.6 12.500.6z" fill="url(#pg)" stroke="#2b6b9f"/><circle cx="12.500" cy="12.300" r="4.600" fill="#fff"/></svg>
    <div class="popup"><b>Absam Breitweg</b><span class="close">×</span></div>
    <div class="attr"><svg width="12" height="8" viewBox="0 0 12 8"><path fill="#4c7be1" d="M0 0h12v4H0z"/><path fill="#ffd500" d="M0 4h12v4H0z"/></svg> <a>Leaflet</a> | © OpenStreetMap contributors</div>
  </section>
</main>
<aside class="wallpaper"></aside>
</div>
</body>
</html>
```
FILE: styles.css
```css
*{box-sizing:border-box}
body{margin:0;width:1675px;height:1159px;overflow:hidden;background:#f8f9fa;color:#212529;font:16px/24px Ubuntu,"Noto Sans",sans-serif;display:flex;flex-direction:column}
.browser{height:38px;flex:none;background:#211c2b;border-bottom:1px solid #0b0714;display:flex;align-items:flex-start}
.tools{display:flex;align-items:center;width:196px;height:28px;padding-left:19px}
.ico{fill:none;stroke:#e8e8ea;stroke-width:1.5;flex:none}
.back{margin-left:52px}.fwd{margin-left:19px;opacity:.45}.reload{margin-left:19px}
.url{flex:1;height:29px;background:#0f0f23;border-radius:10px 0 0 12px;display:flex;align-items:center;padding:0 2px 2px 8px}
.vee{margin-left:13px}
.addr{margin-left:9px;color:#e6e6ea;font:12.800px/18px "Noto Sans",sans-serif}
.addr i{font-style:normal;color:#a0a0aa}
.grow{flex:1}.trans{margin-right:15px}
.view{flex:1;display:flex}
main{width:1670px;padding:48px 188px 0 185.5px}
.wallpaper{flex:1;background:linear-gradient(#4a2a4e 0,#5a2c4a 3%,#332b50 8%,#4a2f4c 12%,#46406e 17%,#594177 23%,#8d4873 29%,#c85a7c 35%,#f36a6b 43%,#f5815f 48%,#fa6a6c 53%,#f99a62 61%,#f7d96d 65%,#f2e86c 70%,#fab062 74%,#ef5665 76%,#d94a65 82%,#a84565 86%,#67365b 88%,#654066 93%,#4a4066 96%,#55365c 100%)}
.head{display:flex;justify-content:space-between;align-items:center;width:1296px;height:50px}
h1,h2{margin:0;font-weight:500;line-height:1.2;white-space:nowrap}
h1{font-size:40px;height:48px}
.clock{font-weight:700;font-size:24px;line-height:36px;padding-top:10px;color:#343a40}
h1{padding-top:1px;height:49px}
.pick{display:flex;align-items:center;height:38px;margin-top:32px}
.pick label{width:180.5px;white-space:nowrap;padding-bottom:2px}
.select{width:274px;height:38px;border:1px solid #dee2e6;border-radius:6px;background:#fff;padding:0 12px 2px;display:flex;justify-content:space-between;align-items:center}
button{margin-left:16px;width:93px;height:38px;border:0;border-radius:6px;background:#0d6efd;color:#fff;font:inherit;padding:0 0 2px}
h2{font-size:32px;height:38px;margin-top:29px}
table{margin-top:9px;width:1296px;border-collapse:collapse;table-layout:fixed}
.c1{width:121px}.c2{width:169px}.c3{width:153px}.c4{width:165px}.c5{width:196px}.c6{width:289px}.c7{width:202px}
th,td{height:41px;padding:7px 8px 9px;text-align:left;border:1px solid #dee2e6;line-height:24px;white-space:nowrap}
td{background:#f2f2f2;padding:6px 8px 9px}
td:last-child{padding:8px 8px 4px}
th{background:#212529;color:#fff;border-color:#373b3e;font-weight:700}
.soon{color:#198754}
.badge{display:block;width:42px;height:21px;border-radius:6px;background:#6c757d;color:#fff;font-size:12px;line-height:20px;font-weight:700;text-align:center;margin-top:2px}
.map{position:relative;width:1296px;height:400px;margin:20px 0 0 .5px;overflow:hidden;font-family:"Liberation Sans",Arial,sans-serif}
.tiles{display:block;background:#eef0d5}
.tiles path{fill:none}
.tiles .house{fill:#d1c5bd}
.tiles .forest{fill:#add19e}.tiles .grass{fill:#cdebb0}.tiles .farm{fill:#eef0d5}
.tiles .pines{fill:url(#pines)}.tiles .mixed{fill:url(#mixed)}
.tiles .orchard{fill:#aedfa3}.tiles .town{fill:url(#houses)}.tiles .blocks{fill:url(#blocks)}
.tiles .industry{fill:#ebdbe8}.tiles .pale{fill:#f2e9e4}.tiles .sport{fill:#88e0be}.tiles .mint{fill:#dffce2}
.tiles .edge{stroke:#8bdc9a;stroke-width:2}
.tiles .farmyard{fill:#f5dcba}.tiles .church{fill:#aacbaf}.tiles .school{fill:#ffffe5}.tiles .military{fill:url(#mil);stroke:#efb4ae;stroke-width:2}
.tiles .river{fill:#aad3df}
.water{stroke:#aad3df;stroke-width:6}.canal{stroke:#8397b0;stroke-width:4;stroke-dasharray:15 5}
.river-line{stroke:#8fa6c9;stroke-width:3;stroke-dasharray:24 7 5 7}
.ridge{stroke:#8bc486;stroke-width:12}
.track{stroke:#b9954c;stroke-width:2.5;stroke-dasharray:14 7}
.path{stroke:#f2978a;stroke-width:2.7;stroke-dasharray:3 5}
.field{stroke:#c6aa65;stroke-width:3}
.border{stroke:#b99cb5;stroke-width:5;stroke-dasharray:18 6 5 6}
.power{stroke:#9b9b98;stroke-width:2}.tiles .knots{fill:#ccc;stroke:#777;stroke-width:2}
.rocks{stroke:#98a895;stroke-width:5;stroke-dasharray:3 2}.milroad{stroke:#fff;stroke-width:5}
.minor-case{stroke:#c7c3c1;stroke-width:8.500}.minor{stroke:#fff;stroke-width:6.500;stroke-linejoin:round}
.major-case{stroke:#bbb5b0;stroke-width:13}.major{stroke:#fff;stroke-width:10;stroke-linejoin:round}
.yellow-case{stroke:#c8cb8b;stroke-width:16}.yellow{stroke:#f5f8b9;stroke-width:12;stroke-linejoin:round}
.orange-case{stroke:#c99c60;stroke-width:17}.orange{stroke:#fbd4a1;stroke-width:12}
.motor-case{stroke:#cf5a79;stroke-width:32}.motor{stroke:#e892a2;stroke-width:27}
.rail{stroke:#6c6c6c;stroke-width:19}.rail-dash{stroke:#eee;stroke-width:2.500;stroke-dasharray:25 20}
.bridge{stroke:#222;stroke-width:3}
.spring{fill:#eef8fc;stroke:#73b6ec;stroke-width:5}
.tiles text{font-family:"Noto Sans",sans-serif;font-size:30px;fill:#222;stroke:#fff;stroke-width:5px;stroke-opacity:.8;paint-order:stroke;stroke-linejoin:round}
.tiles .road{stroke:#f5f8b9}
.tiles .place{font-size:39px;fill:#777}.tiles .city{font-size:43px;fill:#333}
.tiles .camp{font-style:italic;font-size:29px;fill:#a32638}
.tiles .admin{fill:#957da0;stroke:none}.tiles .railname{fill:#666}.tiles .auto{stroke:#e892a2}.tiles .river-name{font-size:34px;fill:#6a8fb5;stroke:none}
.tiles .shield rect{fill:#f0f1d6;stroke:#c3c596;stroke-width:3}
.tiles .shield text{stroke:none;text-anchor:middle;font-size:30px;fill:#4f5525}
.tiles .b rect{fill:#fae3c8;stroke:#c9a77c}.tiles .w rect{fill:#f2f2f2;stroke:#bbb}.tiles .w text{fill:#444}
.zoomctl{position:absolute;left:10px;top:10px;width:34px;height:64px;border:2px solid rgba(0,0,0,.25);border-radius:4px;background:#fff;background-clip:padding-box}
.zoomctl span{display:block;height:30px;text-align:center;color:#000;font:bold 22px/34px "Liberation Mono",monospace}
.zoomctl span:first-child{border-bottom:1px solid #ccc;line-height:35px}
.pin{position:absolute;left:636px;top:160px}
.shadow{position:absolute;left:648px;top:161px;fill:#222;opacity:.4;filter:blur(2px)}
.popup{position:absolute;left:574px;top:109px;width:149px;height:44px;border-radius:12px;background:#fff;box-shadow:0 3px 14px rgba(0,0,0,.4);color:#333;font-size:13px;line-height:44px;padding-left:20px;white-space:nowrap}
.popup:after{content:"";position:absolute;left:64px;bottom:-10px;border:10px solid transparent;border-top-color:#fff;border-bottom:0}
.close{position:absolute;right:0;top:0;width:25px;height:24px;text-align:center;color:#757575;font:18px/27px "Liberation Sans",sans-serif}
.attr{position:absolute;right:0;bottom:0;height:16px;width:235px;background:rgba(255,255,255,.8);font-size:12px;line-height:16px;color:#333;padding:0 5px;white-space:nowrap}
.attr a{color:#0078a8}
```
